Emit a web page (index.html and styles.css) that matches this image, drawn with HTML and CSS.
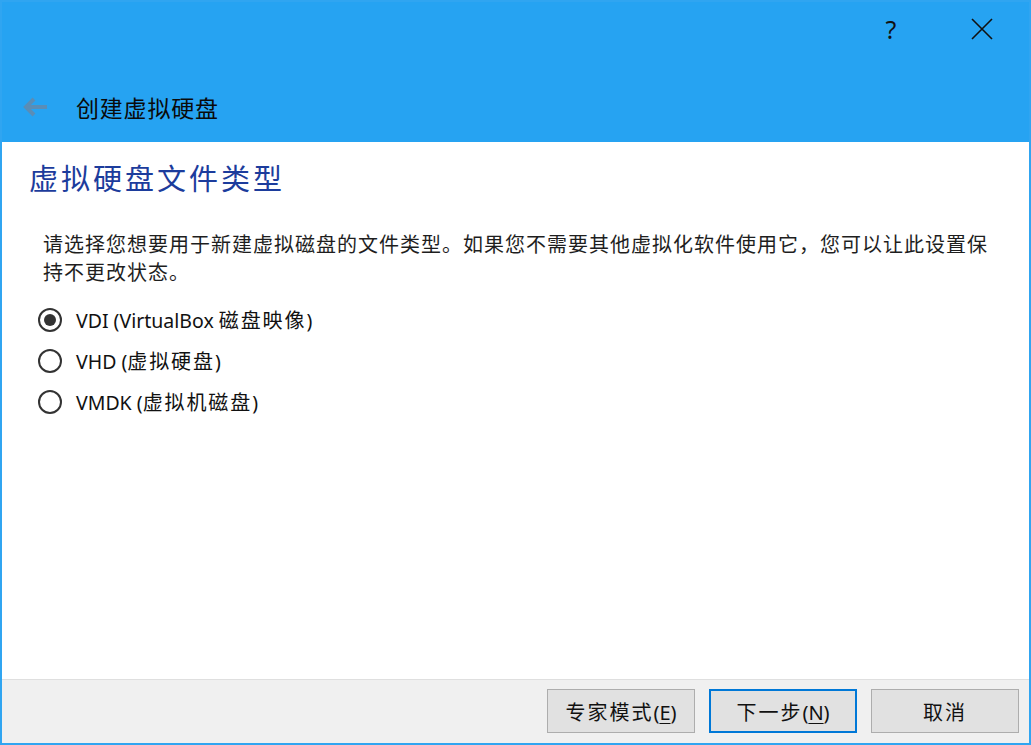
FILE: index.html
```html
<!DOCTYPE html>
<html lang="zh-CN">
<head>
<meta charset="utf-8">
<title>创建虚拟硬盘</title>
<link rel="stylesheet" href="styles.css">
</head>
<body>
<div class="window">
  <header class="header">
    <div class="caption">
      <div class="cap-btn help">?</div>
      <div class="cap-btn close">
        <svg width="22" height="22" viewBox="0 0 22 22"><path d="M1 1 L21 21 M21 1 L1 21" stroke="#111" stroke-width="1.6" fill="none"/></svg>
      </div>
    </div>
    <div class="titlebar">
      <svg class="back" width="25" height="20" viewBox="0 0 25 20"><path d="M4 10 H25 M12 2 L4 10 L12 18" stroke="#5a8db6" stroke-width="4" fill="none"/></svg>
      <span class="title">创建虚拟硬盘</span>
    </div>
  </header>
  <main class="content">
    <h1 class="subtitle">虚拟硬盘文件类型</h1>
    <p class="desc">请选择您想要用于新建虚拟磁盘的文件类型。如果您不需要其他虚拟化软件使用它，您可以让此设置保持不更改状态。</p>
    <div class="options">
      <div class="option"><span class="radio checked"></span><span class="label">VDI (VirtualBox <span class="cjk">磁盘映像</span>)</span></div>
      <div class="option"><span class="radio"></span><span class="label">VHD (<span class="cjk">虚拟硬盘</span>)</span></div>
      <div class="option"><span class="radio"></span><span class="label">VMDK (<span class="cjk">虚拟机磁盘</span>)</span></div>
    </div>
  </main>
  <footer class="footer">
    <button class="btn"><span class="cjk">专家模式</span>(<u>E</u>)</button>
    <button class="btn focused"><span class="cjk">下一步</span>(<u>N</u>)</button>
    <button class="btn"><span class="cjk">取消</span></button>
  </footer>
</div>
</body>
</html>
```
FILE: styles.css
```css
* { box-sizing: border-box; }
html, body { margin: 0; padding: 0; }
body {
  width: 1031px;
  height: 745px;
  overflow: hidden;
  font-family: "Noto Sans", "Noto Sans CJK SC", sans-serif;
  background: #fff;
}
.window {
  width: 1031px;
  height: 745px;
  border: 2px solid #30a5f1;
  display: flex;
  flex-direction: column;
  background: #fff;
}
.header {
  height: 140px;
  background: #26a3f2;
  display: flex;
  flex-direction: column;
}
.caption {
  height: 56px;
  display: flex;
  justify-content: flex-end;
}
.cap-btn {
  display: flex;
  align-items: center;
  justify-content: center;
  height: 54px;
  color: #111;
}
.help {
  width: 88px;
  font-family: "Noto Sans", sans-serif;
  font-size: 25px;
}
.close { width: 94px; }
.titlebar {
  height: 84px;
  padding-top: 14px;
  padding-left: 20px;
  display: flex;
  align-items: center;
}
.back { flex: none; }
.title {
  margin-left: 29px;
  font-family: "Noto Sans CJK SC", sans-serif;
  font-size: 23px;
  letter-spacing: 0.8px;
  color: #0a0a0a;
}
.content {
  flex: 1;
  padding: 17px 0 0 27px;
}
.subtitle {
  margin: 0;
  font-family: "Noto Sans CJK SC", sans-serif;
  font-weight: normal;
  font-size: 29px;
  letter-spacing: 3px;
  line-height: 36px;
  color: #1c3c9c;
}
.desc {
  margin: 35px 0 0 14px;
  width: 955px;
  font-family: "Noto Sans CJK SC", sans-serif;
  font-size: 20px;
  letter-spacing: 1px;
  line-height: 28px;
  color: #1e1e1e;
}
.options {
  margin-top: 13px;
  margin-left: 9px;
  display: flex;
  flex-direction: column;
}
.option {
  height: 41px;
  display: flex;
  align-items: center;
}
.radio {
  width: 24px;
  height: 24px;
  border: 2px solid #333;
  border-radius: 50%;
  display: flex;
  align-items: center;
  justify-content: center;
  flex: none;
}
.radio.checked::after {
  content: "";
  width: 12px;
  height: 12px;
  border-radius: 50%;
  background: #333;
}
.label {
  margin-left: 14px;
  font-size: 19.5px;
  color: #111;
}
.cjk {
  font-family: "Noto Sans CJK SC", sans-serif;
  font-size: 20px;
  letter-spacing: 1.9px;
}
.footer {
  height: 64px;
  border-top: 1px solid #dfdfdf;
  background: #f0f0f0;
  display: flex;
  justify-content: flex-end;
  align-items: flex-start;
  padding: 9px 10px 0 0;
  gap: 14px;
}
.btn {
  width: 148px;
  height: 44px;
  background: #e1e1e1;
  border: 1px solid #adadad;
  font-family: "Noto Sans", "Noto Sans CJK SC", sans-serif;
  font-size: 20px;
  color: #111;
  padding: 0;
}
.btn .cjk { letter-spacing: 2px; }
.btn.focused { border: 2px solid #0078d7; }
.btn u { text-decoration-thickness: 1px; text-underline-offset: 3px; }
```
